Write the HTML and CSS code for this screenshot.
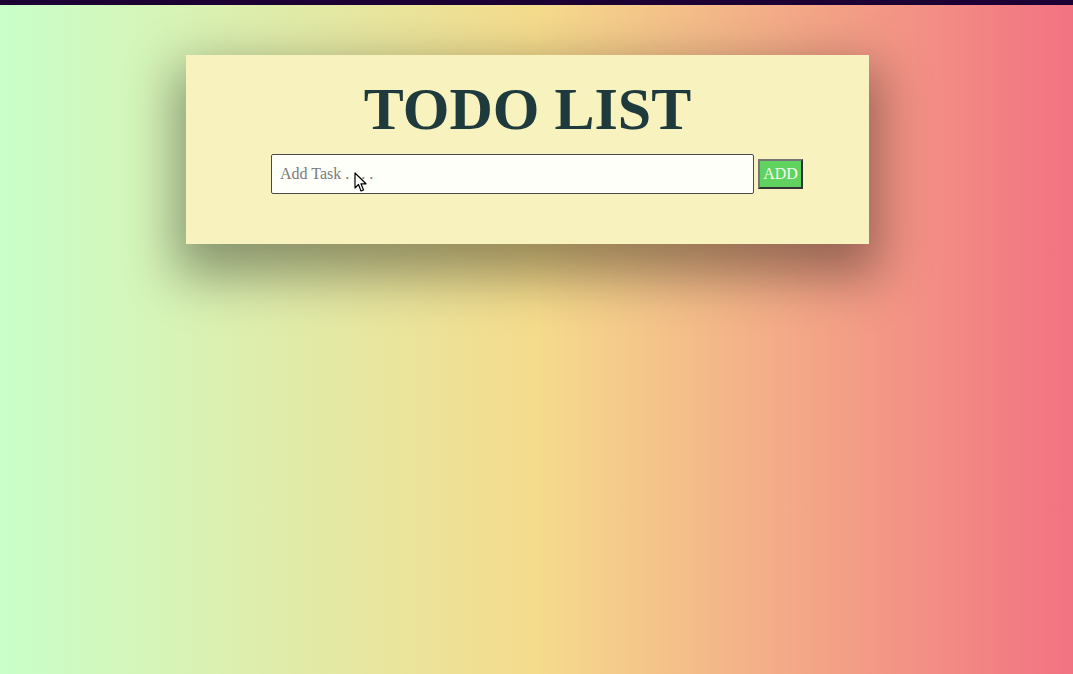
FILE: index.html
```html
<!DOCTYPE html>
<html>
<head>
<meta charset="utf-8">
<link rel="stylesheet" href="styles.css">
</head>
<body>
<div class="topbar"></div>
<main class="page">
  <section class="card">
    <h1 class="title">TODO LIST</h1>
    <form class="add-form">
      <input class="task-input" type="text" placeholder="Add Task . . . .">
      <button class="add-btn" type="button">ADD</button>
    </form>
  </section>
</main>
<svg class="cursor" width="14" height="22" viewBox="0 0 14 22"><path d="M1 1 L1 16 L4.5 12.5 L7 19 L9.5 18 L7 11.8 L12 11.8 Z" fill="#fff" stroke="#000" stroke-width="1.2" stroke-linejoin="round"/></svg>
</body>
</html>
```

FILE: styles.css
```css
html, body {
  margin: 0;
  padding: 0;
  height: 100%;
}
body {
  background: linear-gradient(to right, #c9ffca 0%, #f5db8c 50%, #f27282 100%);
  font-family: "Liberation Serif", "Times New Roman", serif;
  overflow: hidden;
  position: relative;
}
.topbar {
  height: 5px;
  background: #1c0033;
}
.page {
  width: 1055px;
  display: flex;
  justify-content: center;
  padding-top: 50px;
}
.card {
  width: 683px;
  height: 189px;
  box-sizing: border-box;
  background: #f8f3be;
  box-shadow: 0 22px 48px 10px rgba(0, 0, 0, 0.38);
  padding-top: 19px;
  display: flex;
  flex-direction: column;
  align-items: center;
}
.title {
  margin: 0;
  font-size: 60px;
  line-height: 70px;
  font-weight: bold;
  color: #1f3a3d;
}
.add-form {
  display: flex;
  align-items: center;
  gap: 4px;
  margin-top: 10px;
  margin-left: 19px;
}
.task-input {
  width: 483px;
  height: 40px;
  box-sizing: border-box;
  border: 1px solid #4a4a4a;
  border-radius: 2px;
  background: #fffff9;
  padding: 0 8px;
  font-family: "Liberation Serif", serif;
  font-size: 16px;
  outline: none;
}
.task-input::placeholder {
  color: #7a7a7a;
}
.add-btn {
  width: 45px;
  height: 30px;
  box-sizing: border-box;
  background: #60d260;
  color: #f4fff0;
  border: 2px solid;
  border-color: #777 #333 #333 #777;
  font-family: "Liberation Serif", serif;
  font-size: 16px;
  padding: 0;
}
.cursor {
  position: absolute;
  left: 354px;
  top: 172px;
}
```
